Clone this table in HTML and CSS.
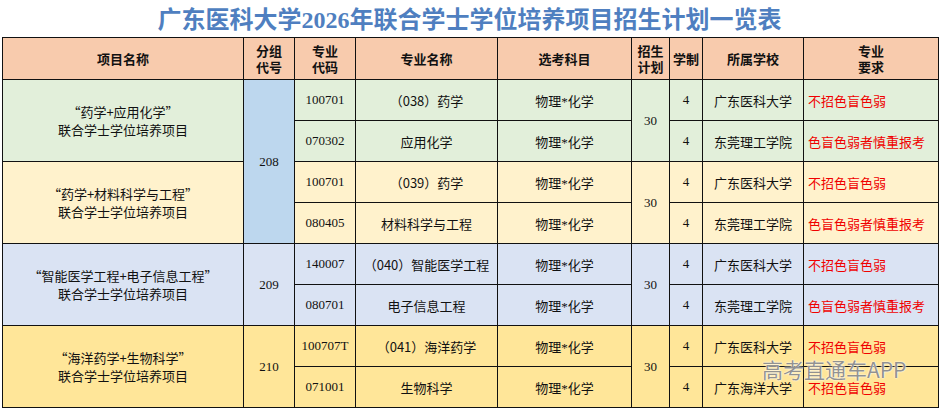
FILE: index.html
```html
<!DOCTYPE html>
<html lang="zh-CN">
<head>
<meta charset="utf-8">
<title>广东医科大学2026年联合学士学位培养项目招生计划一览表</title>
<link rel="stylesheet" href="styles.css">
</head>
<body>
<div class="page">
  <h1 class="title">广东医科大学2026年联合学士学位培养项目招生计划一览表</h1>
  <table class="plan">
    <colgroup>
      <col class="c-name"><col class="c-group"><col class="c-code"><col class="c-major"><col class="c-subj"><col class="c-plan"><col class="c-year"><col class="c-school"><col class="c-req">
    </colgroup>
    <thead>
      <tr class="head">
        <th>项目名称</th>
        <th>分组<br>代号</th>
        <th>专业<br>代码</th>
        <th>专业名称</th>
        <th>选考科目</th>
        <th>招生<br>计划</th>
        <th>学制</th>
        <th>所属学校</th>
        <th>专业<br>要求</th>
      </tr>
    </thead>
    <tbody>
      <tr class="g1">
        <td rowspan="2" class="proj">“药学+应用化学”<br>联合学士学位培养项目</td>
        <td rowspan="4" class="num grp208">208</td>
        <td class="num">100701</td>
        <td class="cjk">（038）药学</td>
        <td>物理*化学</td>
        <td rowspan="2" class="num">30</td>
        <td class="num">4</td>
        <td>广东医科大学</td>
        <td class="req">不招色盲色弱</td>
      </tr>
      <tr class="g1">
        <td class="num">070302</td>
        <td>应用化学</td>
        <td>物理*化学</td>
        <td class="num">4</td>
        <td>东莞理工学院</td>
        <td class="req">色盲色弱者慎重报考</td>
      </tr>
      <tr class="g2">
        <td rowspan="2" class="proj">“药学+材料科学与工程”<br>联合学士学位培养项目</td>
        <td class="num">100701</td>
        <td class="cjk">（039）药学</td>
        <td>物理*化学</td>
        <td rowspan="2" class="num">30</td>
        <td class="num">4</td>
        <td>广东医科大学</td>
        <td class="req">不招色盲色弱</td>
      </tr>
      <tr class="g2">
        <td class="num">080405</td>
        <td>材料科学与工程</td>
        <td>物理*化学</td>
        <td class="num">4</td>
        <td>东莞理工学院</td>
        <td class="req">色盲色弱者慎重报考</td>
      </tr>
      <tr class="g3">
        <td rowspan="2" class="proj">“智能医学工程+电子信息工程”<br>联合学士学位培养项目</td>
        <td rowspan="2" class="num">209</td>
        <td class="num">140007</td>
        <td class="cjk">（040）智能医学工程</td>
        <td>物理*化学</td>
        <td rowspan="2" class="num">30</td>
        <td class="num">4</td>
        <td>广东医科大学</td>
        <td class="req">不招色盲色弱</td>
      </tr>
      <tr class="g3">
        <td class="num">080701</td>
        <td>电子信息工程</td>
        <td>物理*化学</td>
        <td class="num">4</td>
        <td>东莞理工学院</td>
        <td class="req">色盲色弱者慎重报考</td>
      </tr>
      <tr class="g4">
        <td rowspan="2" class="proj">“海洋药学+生物科学”<br>联合学士学位培养项目</td>
        <td rowspan="2" class="num">210</td>
        <td class="num">100707T</td>
        <td class="cjk">（041）海洋药学</td>
        <td>物理*化学</td>
        <td rowspan="2" class="num">30</td>
        <td class="num">4</td>
        <td>广东医科大学</td>
        <td class="req">不招色盲色弱</td>
      </tr>
      <tr class="g4">
        <td class="num">071001</td>
        <td>生物科学</td>
        <td>物理*化学</td>
        <td class="num">4</td>
        <td>广东海洋大学</td>
        <td class="req">不招色盲色弱</td>
      </tr>
    </tbody>
  </table>
  <div class="watermark">高考直通车APP</div>
</div>
</body>
</html>
```
FILE: styles.css
```css
html, body {
  margin: 0;
  padding: 0;
  background: #ffffff;
}
.page {
  position: relative;
  width: 939px;
  height: 410px;
  overflow: hidden;
  font-family: "Liberation Serif", "Noto Sans CJK SC", serif;
}
.title {
  margin: 0;
  height: 37px;
  line-height: 40px;
  text-align: center;
  font-size: 24px;
  font-weight: 700;
  color: #4f7fc0;
  font-family: "Liberation Serif", "Noto Sans CJK SC", serif;
}
.plan {
  margin-left: 2px;
  border-collapse: collapse;
  table-layout: fixed;
  width: 936px;
  font-size: 13px;
  color: #111;
}
.c-name { width: 241px; }
.c-group { width: 51px; }
.c-code { width: 61px; }
.c-major { width: 142px; }
.c-subj { width: 134px; }
.c-plan { width: 38px; }
.c-year { width: 33px; }
.c-school { width: 101px; }
.c-req { width: 135px; }
.plan th, .plan td {
  border: 1px solid #111;
  padding: 0;
  text-align: center;
  vertical-align: middle;
  font-family: "Liberation Serif", "Noto Sans CJK SC", serif;
  white-space: nowrap;
}
.plan th {
  font-family: "Noto Sans CJK SC", sans-serif;
  font-weight: 700;
  line-height: 16px;
  background: #f8cbad;
}
.head { height: 42px; }
tbody tr { height: 41px; }
.plan td.proj {
  line-height: 18px;
  font-family: "Noto Sans CJK SC", sans-serif;
}
.plan td.cjk {
  font-family: "Noto Sans CJK SC", sans-serif;
}
.plan td.req {
  text-align: left;
  padding-left: 4px;
  color: #f00000;
}
.g1 td { background: #e2efda; }
.g2 td { background: #fff2cc; }
.g3 td { background: #dae3f3; }
.g4 td { background: #ffe699; }
.plan td.grp208 { background: #bdd7ee; }
.watermark {
  position: absolute;
  left: 762px;
  top: 354px;
  font-family: "Noto Sans CJK SC", sans-serif;
  font-size: 21px;
  line-height: 30px;
  color: rgba(110, 110, 110, 0.75);
  text-shadow: 0 0 1px #fff, 0 0 2px #fff;
  white-space: nowrap;
}
```
